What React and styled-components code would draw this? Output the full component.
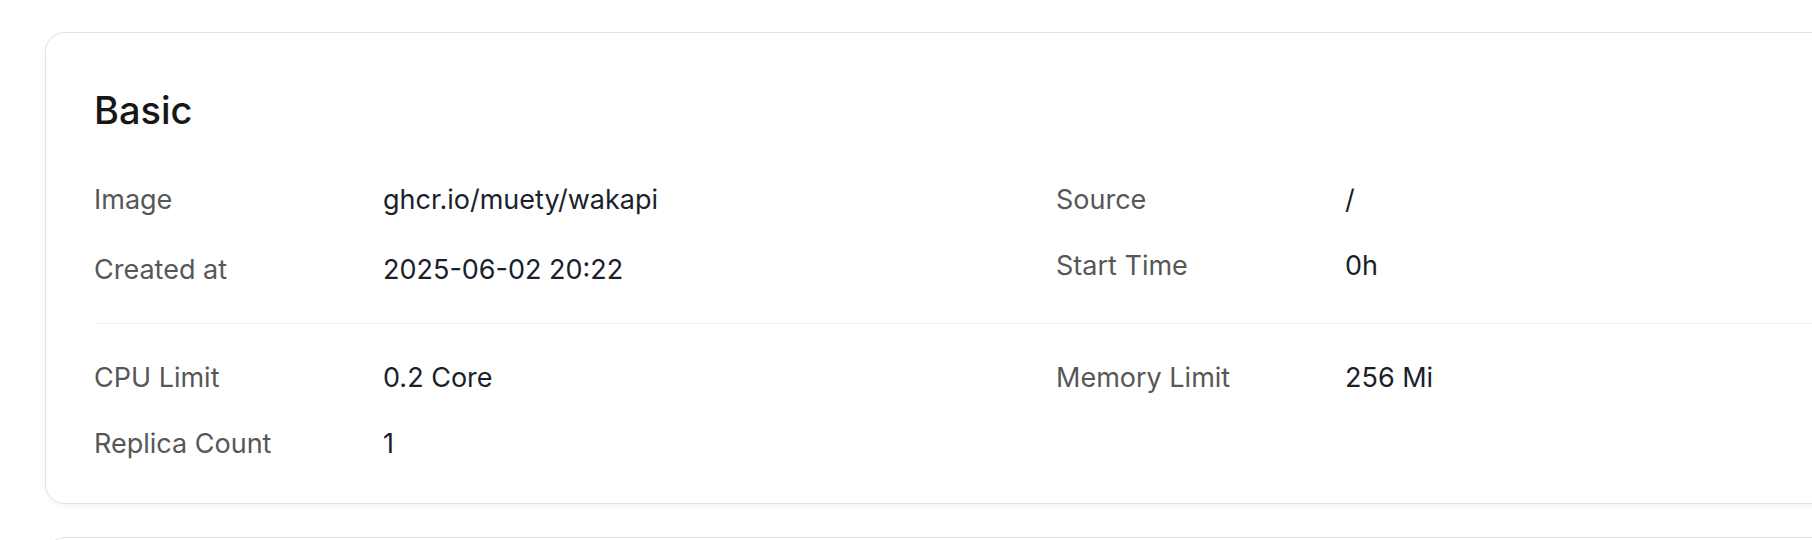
import React from 'react';
import styled, { createGlobalStyle } from 'styled-components';

const GlobalStyle = createGlobalStyle`
  html, body {
    margin: 0;
    padding: 0;
    background: #ffffff;
    overflow: hidden;
  }
  body {
    font-family: Inter, "Noto Sans", "Liberation Sans", sans-serif;
  }
`;

const Page = styled.div`
  display: flex;
  flex-direction: column;
  gap: 33px;
  padding: 32px 0 0 45px;
`;

const Card = styled.section`
  box-sizing: border-box;
  width: 2020px;
  min-height: ${(p) => (p.$empty ? '200px' : 'auto')};
  padding: 50px 48px 0;
  background: #ffffff;
  border: 1px solid #e2e2e2;
  border-radius: 20px;
  box-shadow: 0 2px 5px rgba(0, 0, 0, 0.05);
`;

const Title = styled.h2`
  margin: 0;
  font-size: 38px;
  line-height: 54px;
  font-weight: 500;
  color: #171717;
`;

const Section = styled.div`
  display: grid;
  grid-template-columns: 962px 962px;
  align-items: start;
  padding: ${(p) => p.$pad};
  border-top: ${(p) => (p.$divided ? '1px solid #eceff3' : 'none')};
`;

const Column = styled.dl`
  display: flex;
  flex-direction: column;
  gap: ${(p) => p.$gap || 33}px;
  margin: 0;
`;

const Row = styled.div`
  display: flex;
  align-items: center;
  font-size: 27px;
  line-height: 33px;
`;

const Label = styled.dt`
  width: 289px;
  flex-shrink: 0;
  color: #575757;
`;

const Value = styled.dd`
  margin: 0;
  color: #1a1f2c;
`;

const sections = [
  {
    pad: '46px 0 37px',
    columns: [
      {
        gap: 37,
        rows: [
          ['Image', 'ghcr.io/muety/wakapi'],
          ['Created at', '2025-06-02 20:22'],
        ],
      },
      {
        gap: 33,
        rows: [
          ['Source', '/'],
          ['Start Time', '0h'],
        ],
      },
    ],
  },
  {
    pad: '37px 0 43px',
    divided: true,
    columns: [
      {
        gap: 33,
        rows: [
          ['CPU Limit', '0.2 Core'],
          ['Replica Count', '1'],
        ],
      },
      { gap: 33, rows: [['Memory Limit', '256 Mi']] },
    ],
  },
];

export default function App() {
  return (
    <>
      <GlobalStyle />
      <Page>
        <Card>
          <Title>Basic</Title>
          {sections.map((section, i) => (
            <Section key={i} $pad={section.pad} $divided={section.divided}>
              {section.columns.map((col, j) => (
                <Column key={j} $gap={col.gap}>
                  {col.rows.map(([label, value]) => (
                    <Row key={label}>
                      <Label>{label}</Label>
                      <Value>{value}</Value>
                    </Row>
                  ))}
                </Column>
              ))}
            </Section>
          ))}
        </Card>
        <Card $empty />
      </Page>
    </>
  );
}
